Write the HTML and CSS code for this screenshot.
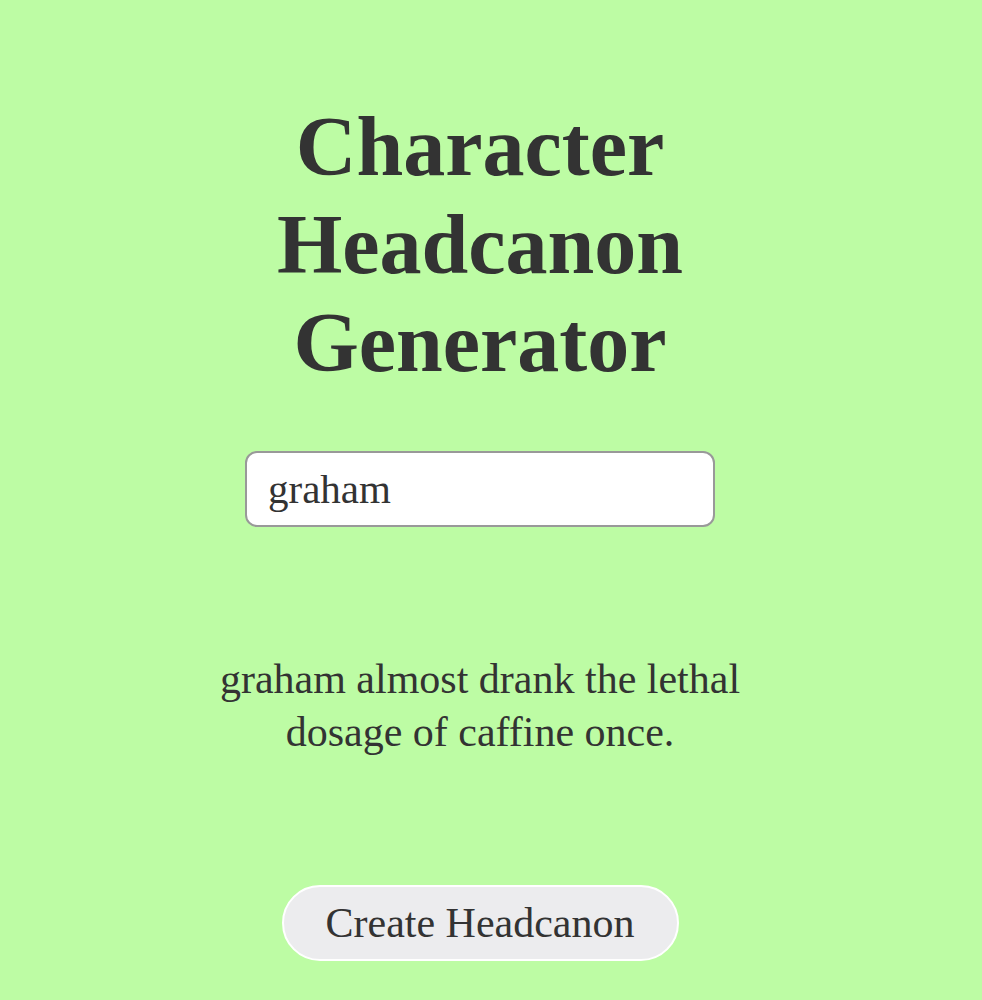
FILE: index.html
```html
<!DOCTYPE html>
<html lang="en">
<head>
  <meta charset="UTF-8" />
  <meta name="viewport" content="width=device-width, initial-scale=1.0"/>
  <title>Character Headcanon Generator</title>
  <link rel="stylesheet" href="styles.css">
</head>
<body>

  <div class="page">
    <h1>Character Headcanon Generator</h1>
    <input type="text" id="nameInput" value="graham" />
    <p id="headcanon" class="headcanon">graham almost drank the lethal dosage of caffine once.</p>
    <button class="create-btn" onclick="createHeadcanon()">Create Headcanon</button>
  </div>

  <script>
    const headcanons = [
      "almost drank the lethal dosage of caffine once.",
      "sleeps with a nightlight on.",
      "can't whistle no matter how hard they try.",
      "has named every plant in their house."
    ];

    function createHeadcanon() {
      const name = document.getElementById('nameInput').value || "someone";
      const pick = headcanons[Math.floor(Math.random() * headcanons.length)];
      document.getElementById('headcanon').textContent = name + " " + pick;
    }
  </script>

</body>
</html>
```

FILE: styles.css
```css
body {
  margin: 0;
  font-family: "Liberation Serif", "Times New Roman", serif;
  background-color: #bdfca4;
  color: #333;
}
.page {
  width: 960px;
  display: flex;
  flex-direction: column;
  align-items: center;
  text-align: center;
}
h1 {
  width: 600px;
  margin: 98px 0 0;
  font-size: 84px;
  line-height: 98px;
  font-weight: bold;
}
input {
  box-sizing: border-box;
  width: 470px;
  height: 76px;
  margin-top: 59px;
  padding: 0 21px;
  font-family: inherit;
  font-size: 41px;
  color: #333;
  background: white;
  border: 2px solid #999;
  border-radius: 12px;
  outline: none;
}
.headcanon {
  width: 600px;
  margin: 126px 0 0;
  font-size: 42px;
  line-height: 53px;
}
.create-btn {
  box-sizing: border-box;
  width: 397px;
  height: 76px;
  margin-top: 126px;
  font-family: inherit;
  font-size: 42px;
  color: #333;
  background-color: #ececee;
  border: 2px solid white;
  border-radius: 38px;
}
```
